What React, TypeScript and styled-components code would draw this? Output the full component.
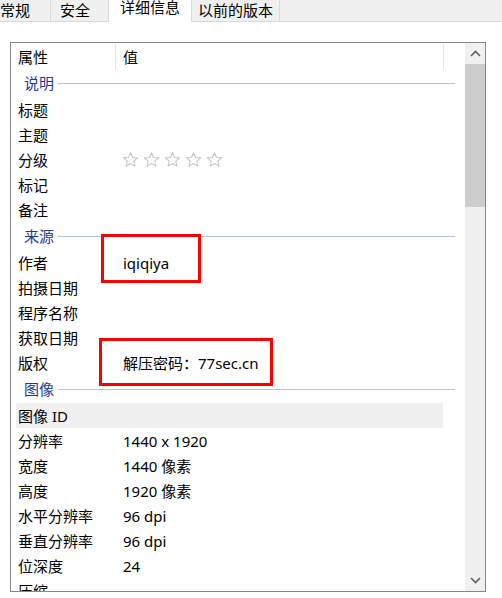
import React from 'react';
import styled, { createGlobalStyle } from 'styled-components';

const GlobalStyle = createGlobalStyle`
  html, body {
    margin: 0;
    padding: 0;
    background: #ffffff;
  }
  body {
    font-family: "Noto Sans", "Noto Sans CJK SC", sans-serif;
    font-size: 15px;
    color: #000000;
  }
`;

interface Row {
  name: string;
  value?: string;
  stars?: boolean;
  hover?: boolean;
}

interface Group {
  title: string;
  rows: Row[];
}

const groups: Group[] = [
  {
    title: '说明',
    rows: [
      { name: '标题' },
      { name: '主题' },
      { name: '分级', stars: true },
      { name: '标记' },
      { name: '备注' },
    ],
  },
  {
    title: '来源',
    rows: [
      { name: '作者', value: 'iqiqiya' },
      { name: '拍摄日期' },
      { name: '程序名称' },
      { name: '获取日期' },
      { name: '版权', value: '解压密码：77sec.cn' },
    ],
  },
  {
    title: '图像',
    rows: [
      { name: '图像 ID', hover: true },
      { name: '分辨率', value: '1440 x 1920' },
      { name: '宽度', value: '1440 像素' },
      { name: '高度', value: '1920 像素' },
      { name: '水平分辨率', value: '96 dpi' },
      { name: '垂直分辨率', value: '96 dpi' },
      { name: '位深度', value: '24' },
      { name: '压缩' },
    ],
  },
];

const Star = () => (
  <svg width="17" height="17" viewBox="0 0 24 24">
    <path
      d="M12 2.5l2.9 6.6 7.1.6-5.4 4.7 1.6 7-6.2-3.7-6.2 3.7 1.6-7L2 9.7l7.1-.6z"
      fill="none"
      stroke="#c4c4c4"
      strokeWidth="1.5"
      strokeLinejoin="round"
    />
  </svg>
);

const Chevron = ({ down }: { down?: boolean }) => (
  <svg width="11" height="7" viewBox="0 0 11 7">
    <polyline
      points={down ? '1,1 5.5,5.5 10,1' : '1,6 5.5,1.5 10,6'}
      fill="none"
      stroke="#606060"
      strokeWidth="1.6"
    />
  </svg>
);

export default function App() {
  return (
    <>
      <GlobalStyle />
      <Window>
        <TabBar>
          <Tab $width={51} $padLeft={0}>常规</Tab>
          <Tab $width={58} $padLeft={9}>安全</Tab>
          <Tab $width={83} $padLeft={11} $active>详细信息</Tab>
          <Tab $width={88} $padLeft={6}>以前的版本</Tab>
        </TabBar>
        <Page>
          <ListBox>
            <Content>
              <Header>
                <HeaderCell $width={105}>属性</HeaderCell>
                <HeaderCell $width={328}>值</HeaderCell>
              </Header>
              {groups.map((g) => (
                <React.Fragment key={g.title}>
                  <GroupRow>
                    <GroupLabel>{g.title}</GroupLabel>
                    <GroupLine />
                  </GroupRow>
                  {g.rows.map((r) => (
                    <ItemRow key={r.name} $hover={r.hover}>
                      <NameCell>{r.name}</NameCell>
                      <ValueCell>
                        {r.stars ? (
                          <Stars>
                            <Star />
                            <Star />
                            <Star />
                            <Star />
                            <Star />
                          </Stars>
                        ) : (
                          r.value
                        )}
                      </ValueCell>
                    </ItemRow>
                  ))}
                </React.Fragment>
              ))}
            </Content>
            <ScrollBar>
              <ScrollButton>
                <Chevron />
              </ScrollButton>
              <Thumb />
              <Track />
              <ScrollButton>
                <Chevron down />
              </ScrollButton>
            </ScrollBar>
          </ListBox>
          <Marker $left={101} $top={234} $width={100} $height={49} />
          <Marker $left={99} $top={338} $width={174} $height={48} />
        </Page>
      </Window>
    </>
  );
}

const Window = styled.div`
  width: 502px;
  height: 598px;
  overflow: hidden;
  background: #ffffff;
`;

const TabBar = styled.div`
  display: flex;
  height: 21px;
  background: #f0f0f0;
  border-bottom: 1px solid #d9d9d9;
`;

const Tab = styled.div<{ $width: number; $padLeft: number; $active?: boolean }>`
  box-sizing: border-box;
  width: ${(p) => p.$width}px;
  padding-left: ${(p) => p.$padLeft}px;
  height: ${(p) => (p.$active ? 22 : 21)}px;
  border-right: 1px solid #d9d9d9;
  background: ${(p) => (p.$active ? '#ffffff' : '#f0f0f0')};
  line-height: ${(p) => (p.$active ? 14 : 20)}px;
  white-space: nowrap;
  position: relative;
  z-index: ${(p) => (p.$active ? 1 : 0)};
`;

const Page = styled.div`
  position: relative;
  padding: 20px 0 0 10px;
`;

const ListBox = styled.div`
  display: flex;
  width: 476px;
  height: 550px;
  box-sizing: border-box;
  border: 1px solid #828790;
  overflow: hidden;
`;

const Content = styled.div`
  flex: 1;
  overflow: hidden;
`;

const Header = styled.div`
  display: flex;
  height: 26px;
`;

const HeaderCell = styled.div<{ $width: number }>`
  box-sizing: border-box;
  width: ${(p) => p.$width}px;
  padding-left: 7px;
  border-right: 1px solid #e5e5e5;
  margin-top: 1px;
  line-height: 27px;
`;

const GroupRow = styled.div`
  display: flex;
  align-items: center;
  height: 28px;
  padding: 0 10px 0 13px;
  box-sizing: border-box;
`;

const GroupLabel = styled.span`
  color: #1e3c96;
  line-height: 1;
`;

const GroupLine = styled.div`
  flex: 1;
  height: 1px;
  margin-left: 4px;
  background: #b7c4e4;
`;

const ItemRow = styled.div<{ $hover?: boolean }>`
  display: flex;
  align-items: center;
  height: 25px;
  width: 427px;
  margin-left: 5px;
  background: ${(p) => (p.$hover ? '#f0f0f0' : 'transparent')};
`;

const NameCell = styled.div`
  width: 105px;
  padding-left: 2px;
  white-space: nowrap;
`;

const ValueCell = styled.div`
  flex: 1;
  white-space: nowrap;
`;

const Stars = styled.div`
  display: flex;
  gap: 4px;
  margin-left: -1px;
`;

const ScrollBar = styled.div`
  width: 20px;
  display: flex;
  flex-direction: column;
  background: #f0f0f0;
`;

const ScrollButton = styled.div`
  height: 21px;
  display: flex;
  align-items: center;
  justify-content: center;
`;

const Thumb = styled.div`
  height: 143px;
  background: #cdcdcd;
`;

const Track = styled.div`
  flex: 1;
`;

const Marker = styled.div<{ $left: number; $top: number; $width: number; $height: number }>`
  position: absolute;
  left: ${(p) => p.$left}px;
  top: ${(p) => p.$top - 22}px;
  width: ${(p) => p.$width}px;
  height: ${(p) => p.$height}px;
  box-sizing: border-box;
  border: 3px solid #ff0000;
  pointer-events: none;
`;
